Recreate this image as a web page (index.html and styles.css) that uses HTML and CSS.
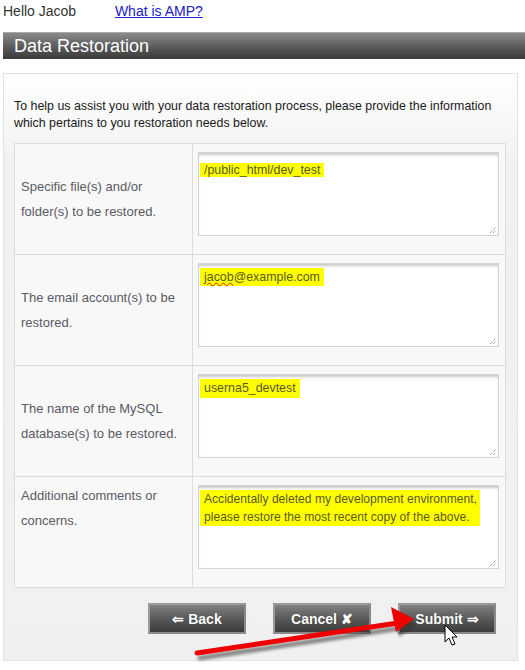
FILE: index.html
```html
<!DOCTYPE html>
<html>
<head>
<meta charset="utf-8">
<link rel="stylesheet" href="styles.css">
</head>
<body>
<div class="top">
  <span class="hello">Hello Jacob</span>
  <a class="amp" href="#">What is AMP?</a>
</div>
<div class="bar">Data Restoration</div>
<div class="box">
  <p class="intro">To help us assist you with your data restoration process, please provide the information which pertains to you restoration needs below.</p>
  <table class="form">
    <tr>
      <td class="lbl">Specific file(s) and/or<br>folder(s) to be restored.</td>
      <td class="fld"><div class="ta ta1"><span class="hl">/public_html/dev_test</span><svg class="grip" width="8" height="8" viewBox="0 0 8 8"><path d="M1 7L7 1M4 7L7 4" stroke="#777" stroke-width="1" stroke-dasharray="1 1" fill="none"/></svg></div></td>
    </tr>
    <tr>
      <td class="lbl">The email account(s) to be<br>restored.</td>
      <td class="fld"><div class="ta ta2"><span class="hl"><span class="sp">jacob</span>@example.com</span><svg class="grip" width="8" height="8" viewBox="0 0 8 8"><path d="M1 7L7 1M4 7L7 4" stroke="#777" stroke-width="1" stroke-dasharray="1 1" fill="none"/></svg></div></td>
    </tr>
    <tr>
      <td class="lbl">The name of the MySQL<br>database(s) to be restored.</td>
      <td class="fld"><div class="ta ta3"><span class="hl">userna5_devtest</span><svg class="grip" width="8" height="8" viewBox="0 0 8 8"><path d="M1 7L7 1M4 7L7 4" stroke="#777" stroke-width="1" stroke-dasharray="1 1" fill="none"/></svg></div></td>
    </tr>
    <tr>
      <td class="lbl lbl-top">Additional comments or<br>concerns.</td>
      <td class="fld"><div class="ta ta4"><span class="hl hl-block">Accidentally deleted my development environment,<br>please restore the most recent copy of the above.</span><svg class="grip" width="8" height="8" viewBox="0 0 8 8"><path d="M1 7L7 1M4 7L7 4" stroke="#777" stroke-width="1" stroke-dasharray="1 1" fill="none"/></svg></div></td>
    </tr>
  </table>
  <div class="buttons">
    <button class="btn">&#8656; Back</button>
    <button class="btn">Cancel &#10008;</button>
    <button class="btn">Submit &#8658;</button>
  </div>
</div>
<svg class="annot" width="525" height="670" viewBox="0 0 525 670">
  <defs>
    <filter id="sh" x="-20%" y="-20%" width="140%" height="160%">
      <feGaussianBlur stdDeviation="1.6"/>
    </filter>
  </defs>
  <g transform="translate(3,5)" opacity="0.55" filter="url(#sh)">
    <path d="M197 653 L398 623" stroke="#333" stroke-width="5" stroke-linecap="round"/>
    <path d="M414 619 L391 607 L396 632 Z" fill="#333"/>
  </g>
  <path d="M197 653 L398 623" stroke="#ee0000" stroke-width="5" stroke-linecap="round"/>
  <path d="M414 619 L391 607 L396 632 Z" fill="#ee0000"/>
  <path d="M445 625 L445 642 L449 638 L452 645 L455 644 L452 637 L457 637 Z" fill="#fff" stroke="#000" stroke-width="1" stroke-linejoin="miter"/>
</svg>
</body>
</html>
```

FILE: styles.css
```css
html, body {
  margin: 0;
  padding: 0;
}
body {
  width: 525px;
  height: 670px;
  background: #ffffff;
  font-family: "Liberation Sans", Arial, sans-serif;
  position: relative;
  overflow: hidden;
}
.top {
  height: 32px;
  padding-left: 3px;
  line-height: 22px;
  font-size: 14px;
  color: #333;
}
.hello {
  display: inline-block;
  width: 108px;
}
.amp {
  color: #2020cc;
  text-decoration: underline;
}
.bar {
  margin-left: 3px;
  height: 26px;
  border-top: 1px solid #a8a8a8;
  background: linear-gradient(#8a8a8a, #5a5a5a 55%, #3a3a3a);
  color: #ffffff;
  font-size: 18px;
  line-height: 26px;
  padding-left: 11px;
}
.box {
  margin: 14px 0 0 3px;
  width: 515px;
  height: 588px;
  box-sizing: border-box;
  border: 1px solid #e2e2e2;
  background: linear-gradient(#ffffff, #f1f1f1 90px, #f0f0f0);
  padding: 24px 13px 0 10px;
}
.intro {
  margin: 0 0 11px;
  font-size: 12.4px;
  line-height: 17px;
  color: #1a1a1a;
}
.form {
  width: 492px;
  border-collapse: collapse;
  background: #f8f8f8;
}
.form td {
  border: 1px solid #dcdcdc;
  height: 111px;
  box-sizing: border-box;
  padding: 0;
}
.lbl {
  width: 178px;
  padding-left: 6px !important;
  font-size: 13px;
  line-height: 25px;
  color: #5a5a64;
  vertical-align: middle;
}
.lbl-top {
  vertical-align: top;
  padding-top: 6px !important;
}
.fld {
  vertical-align: top;
  padding: 8px 0 0 5px !important;
}
.ta {
  position: relative;
  width: 301px;
  height: 84px;
  box-sizing: border-box;
  border: 1px solid #d4d4d4;
  background: #fff;
  box-shadow: inset 0 3px 3px -1px #c8c8c8;
  font-size: 12.4px;
  color: #555522;
  padding: 4px 0 0 1px;
}
.ta1 {
  padding-top: 10px;
}
.hl {
  display: inline-block;
  background: #ffff00;
  padding: 0 4px 0 4px;
  line-height: 18px;
  color: #5a5a20;
}
.ta1 .hl {
  line-height: 14px;
}
.ta3 .hl {
  line-height: 19px;
}
.hl-block {
  padding: 0 3px 0 4px;
  font-size: 12.1px;
}
.sp {
  text-decoration: underline wavy #e02020;
  text-decoration-thickness: 1px;
}
.grip {
  position: absolute;
  right: 1px;
  bottom: 1px;
}
.buttons {
  display: flex;
  justify-content: flex-end;
  gap: 27px;
  margin: 15px 8px 0 0;
}
.btn {
  width: 98px;
  height: 31px;
  box-sizing: border-box;
  border: 2px solid #9a9a9a;
  border-right-color: #8a8a8a;
  border-bottom-color: #8a8a8a;
  background: linear-gradient(#808080, #5a5a5a 50%, #3c3c3c);
  color: #ffffff;
  font-family: "Liberation Sans", Arial, sans-serif;
  font-weight: bold;
  font-size: 14px;
  text-shadow: 0 0 1px #333;
  padding: 0;
}
.annot {
  position: absolute;
  left: 0;
  top: 0;
  pointer-events: none;
}
```
